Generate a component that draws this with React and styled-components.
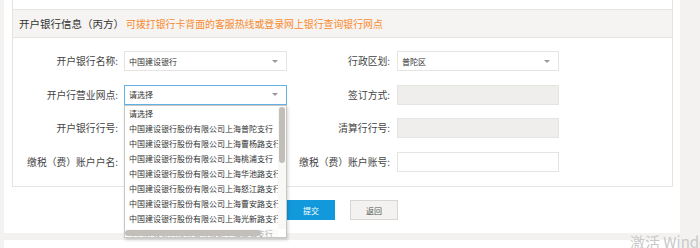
import styled, { createGlobalStyle } from "styled-components";

const GlobalStyle = createGlobalStyle`
  html, body {
    margin: 0;
    padding: 0;
    background: #f3f2f0;
  }
  body {
    font-family: "Noto Sans CJK SC", "Noto Sans", sans-serif;
    color: #444;
  }
`;

const branches = [
  "请选择",
  "中国建设银行股份有限公司上海普陀支行",
  "中国建设银行股份有限公司上海曹杨路支行",
  "中国建设银行股份有限公司上海桃浦支行",
  "中国建设银行股份有限公司上海华池路支行",
  "中国建设银行股份有限公司上海怒江路支行",
  "中国建设银行股份有限公司上海曹安路支行",
  "中国建设银行股份有限公司上海光新路支行",
  "中国建设银行股份有限公司上海真如支行",
  "中国建设银行股份有限公司上海长寿路支行",
];

const Select = ({ value, focused, children }) => (
  <St.Select $focused={focused}>
    <span>{value}</span>
    <St.Caret />
    {children}
  </St.Select>
);

// 브라우저 스크롤바 대신 직접 그린 스크롤바
const BranchList = ({ items }) => (
  <St.Dropdown>
    <St.List>
      {items.map((name, idx) => (
        <St.Option key={idx}>{name}</St.Option>
      ))}
    </St.List>
    <St.VTrack>
      <St.VThumb />
    </St.VTrack>
    <St.HTrack>
      <St.HThumb />
    </St.HTrack>
    <St.Corner />
  </St.Dropdown>
);

const App = () => {
  return (
    <>
      <GlobalStyle />
      <St.Page>
        <St.Panel>
          <St.PrevCard />
          <St.Card>
            <St.Header>
              <St.Title>开户银行信息（丙方）</St.Title>
              <St.Hint>可拨打银行卡背面的客服热线或登录网上银行查询银行网点</St.Hint>
            </St.Header>
            <St.Form>
              <St.Label>开户银行名称:</St.Label>
              <Select value="中国建设银行" />
              <St.Label $right>行政区划:</St.Label>
              <Select value="普陀区" />

              <St.Label>开户行营业网点:</St.Label>
              <Select value="请选择" focused>
                <BranchList items={branches} />
              </Select>
              <St.Label $right>签订方式:</St.Label>
              <St.Input disabled />

              <St.Label>开户银行行号:</St.Label>
              <div />
              <St.Label $right>清算行行号:</St.Label>
              <St.Input disabled />

              <St.Label>缴税（费）账户户名:</St.Label>
              <div />
              <St.Label $right>缴税（费）账户账号:</St.Label>
              <St.Input />
            </St.Form>
          </St.Card>
          <St.Actions>
            <St.Button $primary>提交</St.Button>
            <St.Button>返回</St.Button>
          </St.Actions>
        </St.Panel>
        <St.NextPanel />
        <St.Watermark>激活 Windows</St.Watermark>
      </St.Page>
    </>
  );
};

export default App;

const St = {
  Page: styled.div`
    position: relative;
    height: 248px;
    overflow: hidden;
    padding: 0 20px 0 4px;
  `,

  Panel: styled.div`
    background: #fff;
    padding: 0 7px 13px 8px;
  `,

  PrevCard: styled.div`
    height: 9px;
    border-left: 1px solid #e6e4e1;
    border-right: 1px solid #e6e4e1;
  `,

  Card: styled.section`
    border: 1px solid #e6e4e1;
  `,

  Header: styled.div`
    display: flex;
    align-items: center;
    height: 27px;
    padding-left: 6px;
    background: #f5f4f2;
    border-bottom: 1px solid #e6e4e1;
  `,

  Title: styled.span`
    font-size: 10.5px;
    color: #333;
  `,

  Hint: styled.span`
    margin-left: 2px;
    font-size: 9.9px;
    color: #f78b2f;
  `,

  Form: styled.div`
    display: grid;
    grid-template-columns: 111px 163px 110px 162px;
    grid-auto-rows: 20px;
    row-gap: 13.5px;
    padding: 13px 0 14.5px;
  `,

  Label: styled.label`
    display: flex;
    align-items: center;
    justify-content: flex-end;
    padding-right: ${({ $right }) => ($right ? "7px" : "6px")};
    font-size: 9.8px;
    color: #444;
    white-space: nowrap;
  `,

  Select: styled.div`
    position: relative;
    display: flex;
    align-items: center;
    justify-content: space-between;
    box-sizing: border-box;
    height: 20px;
    padding: 0 8px 0 4px;
    font-size: 8px;
    color: #333;
    background: #fff;
    border: 1px solid ${({ $focused }) => ($focused ? "#63b3e8" : "#e6e4e1")};
  `,

  Caret: styled.i`
    width: 0;
    height: 0;
    border-left: 3px solid transparent;
    border-right: 3px solid transparent;
    border-top: 3px solid #9a9a9a;
  `,

  Input: styled.input`
    box-sizing: border-box;
    width: 100%;
    height: 20px;
    margin: 0;
    padding: 0 4px;
    border: 1px solid #e6e4e1;
    background: ${({ disabled }) => (disabled ? "#f0eeec" : "#fff")};
    outline: none;
  `,

  Dropdown: styled.div`
    position: absolute;
    z-index: 5;
    top: 19px;
    left: -1px;
    display: grid;
    grid-template-columns: 1fr 8px;
    grid-template-rows: 1fr 8px;
    width: 163px;
    height: 133px;
    box-sizing: border-box;
    background: #fff;
    border: 1px solid #c9c7c4;
    box-shadow: 1px 2px 3px rgba(0, 0, 0, 0.18);
  `,

  List: styled.div`
    grid-row: 1 / 3;
    grid-column: 1;
    overflow: hidden;
  `,

  Option: styled.div`
    height: 15px;
    line-height: 15px;
    padding: 0 4px;
    font-size: 8px;
    color: #333;
    white-space: nowrap;
  `,

  VTrack: styled.div`
    grid-row: 1;
    grid-column: 2;
    padding: 1px 1px 0;
    background: #f8f8f7;
  `,

  VThumb: styled.div`
    height: 56px;
    border-radius: 3px;
    background: #c2bfba;
  `,

  HTrack: styled.div`
    grid-row: 2;
    grid-column: 1;
    z-index: 1;
    padding: 1px 0;
    background: rgba(248, 248, 247, 0.6);
  `,

  HThumb: styled.div`
    width: 136px;
    height: 6px;
    border-radius: 3px;
    background: #c2bfba;
  `,

  Corner: styled.div`
    grid-row: 2;
    grid-column: 2;
    background: #fff;
  `,

  Actions: styled.div`
    display: flex;
    justify-content: center;
    gap: 15px;
    margin-top: 13px;
  `,

  Button: styled.button`
    width: 48px;
    height: 20px;
    padding: 0;
    font-family: inherit;
    font-size: 8px;
    color: ${({ $primary }) => ($primary ? "#fff" : "#555")};
    background: ${({ $primary }) => ($primary ? "#1199dc" : "#f3f2f0")};
    border: 1px solid ${({ $primary }) => ($primary ? "#1199dc" : "#d8d6d2")};
  `,

  NextPanel: styled.div`
    height: 20px;
    margin-top: 7px;
    background: #fff;
  `,

  Watermark: styled.div`
    position: absolute;
    left: 630px;
    top: 231px;
    font-family: "Noto Sans CJK SC", "Noto Sans", sans-serif;
    font-size: 15px;
    color: #c9c9c9;
    white-space: nowrap;
  `,
};
